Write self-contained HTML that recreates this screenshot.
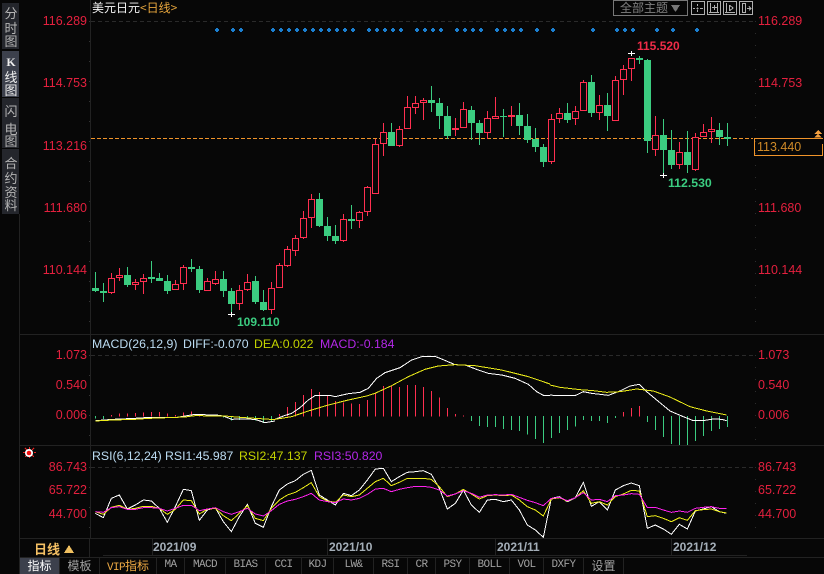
<!DOCTYPE html>
<html><head><meta charset="utf-8">
<style>
html,body{margin:0;padding:0;background:#070707;width:824px;height:574px;overflow:hidden}
body{position:relative;font-family:"Liberation Sans","WenQuanYi Zen Hei",sans-serif}
svg{position:absolute;left:0;top:0}
.t{position:absolute;white-space:nowrap;line-height:14px;font-size:12.5px}
.r{color:#e4203e}
.la{left:0;width:87px;text-align:right}
.ra{left:758px}
.h{font-size:12.3px;color:#bcdcf2}
.c{position:absolute;left:2px;width:18px;text-align:center;color:#b4b4b4;font:13px/14px "WenQuanYi Zen Hei","Noto Sans CJK SC",sans-serif}
.b{position:absolute;left:2px;width:17px;background:#24262c}
.d{position:absolute;font:bold 12px/14px "Liberation Sans",sans-serif;color:#a4aeb8}
.tab{position:absolute;top:558px;height:16px;line-height:15px;text-align:center;color:#a0a0a0;font:12px/15px "WenQuanYi Zen Hei","Noto Sans CJK SC",sans-serif}
.m{font:11px/15px "Liberation Mono",monospace;letter-spacing:-.6px}
</style></head><body>
<div class="b" style="top:3px;height:46px"></div>
<div class="b" style="top:51px;height:46px;background:#3c404c"></div>
<div class="b" style="top:98px;height:50px"></div>
<div class="b" style="top:149px;height:65px"></div>
<div class="c" style="top:6px">分</div><div class="c" style="top:21px">时</div><div class="c" style="top:34px">图</div>
<div class="c" style="top:55px;color:#eee;font:bold 12px/14px 'Liberation Serif',serif">K</div><div class="c" style="top:70px;color:#eee">线</div><div class="c" style="top:83px;color:#eee">图</div>
<div class="c" style="top:104px">闪</div><div class="c" style="top:122px">电</div><div class="c" style="top:134px">图</div>
<div class="c" style="top:156px">合</div><div class="c" style="top:171px">约</div><div class="c" style="top:185px">资</div><div class="c" style="top:198px">料</div>

<svg width="824" height="574" viewBox="0 0 824 574" shape-rendering="crispEdges" fill="none">
<!-- frame -->
<path stroke="#222" d="M90.5 0V538M19.5 214V574M20 334.500H824M20 445.500H824M20 538.500H824M20 557.500H824M89.500 538V557M103 555.500H747M152.500 538V555M327.500 538V555M495.500 538V555M671.500 538V555M59.500 558V574M99.500 558V574M156.500 558V574M184.500 558V574M225.500 558V574M265.500 558V574M301.500 558V574M333.500 558V574M373.500 558V574M407.500 558V574M435.500 558V574M469.500 558V574M509.500 558V574M543.500 558V574M583.500 558V574M623.500 558V574"/>
<path stroke="#333" stroke-dasharray="1 19" d="M89.500 21V330M89.500 355V440M89.500 467V535"/>
<path stroke="#2c2c2c" stroke-dasharray="1 11" d="M755.500 21V330M755.500 355V440M755.500 467V535"/>
<path stroke="#2a2a2a" stroke-dasharray="4 3" d="M91 21.500H753M91 355.500H753M91 467.500H753"/>
<path stroke="#f0942a" stroke-dasharray="4 2" d="M91 138.500H753"/>
<!-- blue dots -->
<g fill="#1b7fd0"><path d="M217 28h1v1h1v2h-1v1h-2v-1h-1v-2h1v-1z"/>
<path d="M233 28h1v1h1v2h-1v1h-2v-1h-1v-2h1v-1zM241 28h1v1h1v2h-1v1h-2v-1h-1v-2h1v-1zM273 28h1v1h1v2h-1v1h-2v-1h-1v-2h1v-1zM281 28h1v1h1v2h-1v1h-2v-1h-1v-2h1v-1zM289 28h1v1h1v2h-1v1h-2v-1h-1v-2h1v-1zM297 28h1v1h1v2h-1v1h-2v-1h-1v-2h1v-1zM305 28h1v1h1v2h-1v1h-2v-1h-1v-2h1v-1zM313 28h1v1h1v2h-1v1h-2v-1h-1v-2h1v-1zM321 28h1v1h1v2h-1v1h-2v-1h-1v-2h1v-1zM329 28h1v1h1v2h-1v1h-2v-1h-1v-2h1v-1zM337 28h1v1h1v2h-1v1h-2v-1h-1v-2h1v-1zM345 28h1v1h1v2h-1v1h-2v-1h-1v-2h1v-1zM353 28h1v1h1v2h-1v1h-2v-1h-1v-2h1v-1zM369 28h1v1h1v2h-1v1h-2v-1h-1v-2h1v-1zM377 28h1v1h1v2h-1v1h-2v-1h-1v-2h1v-1zM385 28h1v1h1v2h-1v1h-2v-1h-1v-2h1v-1zM393 28h1v1h1v2h-1v1h-2v-1h-1v-2h1v-1zM401 28h1v1h1v2h-1v1h-2v-1h-1v-2h1v-1zM417 28h1v1h1v2h-1v1h-2v-1h-1v-2h1v-1zM425 28h1v1h1v2h-1v1h-2v-1h-1v-2h1v-1zM433 28h1v1h1v2h-1v1h-2v-1h-1v-2h1v-1zM441 28h1v1h1v2h-1v1h-2v-1h-1v-2h1v-1zM457 28h1v1h1v2h-1v1h-2v-1h-1v-2h1v-1zM465 28h1v1h1v2h-1v1h-2v-1h-1v-2h1v-1zM473 28h1v1h1v2h-1v1h-2v-1h-1v-2h1v-1zM481 28h1v1h1v2h-1v1h-2v-1h-1v-2h1v-1zM497 28h1v1h1v2h-1v1h-2v-1h-1v-2h1v-1zM505 28h1v1h1v2h-1v1h-2v-1h-1v-2h1v-1zM513 28h1v1h1v2h-1v1h-2v-1h-1v-2h1v-1zM521 28h1v1h1v2h-1v1h-2v-1h-1v-2h1v-1zM537 28h1v1h1v2h-1v1h-2v-1h-1v-2h1v-1zM553 28h1v1h1v2h-1v1h-2v-1h-1v-2h1v-1zM593 28h1v1h1v2h-1v1h-2v-1h-1v-2h1v-1zM617 28h1v1h1v2h-1v1h-2v-1h-1v-2h1v-1zM625 28h1v1h1v2h-1v1h-2v-1h-1v-2h1v-1zM633 28h1v1h1v2h-1v1h-2v-1h-1v-2h1v-1zM657 28h1v1h1v2h-1v1h-2v-1h-1v-2h1v-1zM673 28h1v1h1v2h-1v1h-2v-1h-1v-2h1v-1zM697 28h1v1h1v2h-1v1h-2v-1h-1v-2h1v-1z"/></g>
<!-- red wicks -->
<path stroke="#ff2f50" d="M111.500 273V294M119.500 268V281M135.500 279V290M143.500 274V294M175.500 280V290M183.500 265V290M207.500 278V291M215.500 271V285M239.500 285V310M247.500 274V291M271.500 282V314M279.500 263V288M287.500 246V267M295.500 235V256M303.500 211V239M311.500 194V228M343.500 214V242M359.500 211V228M367.500 186V216M375.500 139V194M383.500 123V156M399.500 126V147M407.500 96V129M415.500 96V114M423.500 98V120M455.500 118V136M463.500 102V128M487.500 111V139M495.500 97V118M511.500 106V126M551.500 114V164M559.500 108V123M575.500 106V125M583.500 80V111M599.500 95V120M615.500 76V120M623.500 65V95M631.500 58V81M655.500 116V156M679.500 142V169M695.500 133V171M703.500 124V137M711.500 117V143"/>
<!-- red bodies -->
<path stroke="#ff2f50" fill="#070707" d="M108.500 278.500h6v14h-6zM116.500 275.500h6v2h-6zM132.500 282.500h6v2h-6zM140.500 278.500h6v3h-6zM172.500 284.500h6v5h-6zM180.500 267.500h6v16h-6zM204.500 281.500h6v9h-6zM212.500 279.500h6v4h-6zM236.500 290.500h6v13h-6zM244.500 282.500h6v7h-6zM268.500 288.500h6v21h-6zM276.500 265.500h6v22h-6zM284.500 249.500h6v16h-6zM292.500 238.500h6v12h-6zM300.500 218.500h6v19h-6zM308.500 199.500h6v18h-6zM340.500 219.500h6v21h-6zM356.500 212.500h6v8h-6zM364.500 187.500h6v24h-6zM372.500 144.500h6v49h-6zM380.500 132.500h6v11h-6zM396.500 129.500h6v16h-6zM404.500 107.500h6v21h-6zM412.500 103.500h6v4h-6zM420.500 100.500h6v2h-6zM460.500 109.500h6v18h-6zM484.500 118.500h6v14h-6zM492.500 116.500h6v2h-6zM548.500 119.500h6v42h-6zM556.500 113.500h6v5h-6zM572.500 111.500h6v7h-6zM580.500 82.500h6v28h-6zM596.500 105.500h6v7h-6zM612.500 80.500h6v40h-6zM620.500 69.500h6v10h-6zM628.500 58.500h6v10h-6zM652.500 135.500h6v14h-6zM676.500 152.500h6v12h-6zM692.500 137.500h6v32h-6zM700.500 132.500h6v4h-6zM708.500 129.500h6v2h-6z"/>
<path fill="#ff2f50" d="M452 128h7v2h-7zM508 115h7v2h-7z"/>
<!-- green wicks -->
<path stroke="#3bcc80" d="M95.500 272V292M103.500 283V302M127.500 267V287M151.500 261V283M159.500 273V281M167.500 275V294M191.500 259V272M199.500 266V293M223.500 271V297M231.500 288V314M255.500 276V304M263.500 290V311M319.500 193V227M327.500 217V241M335.500 225V244M351.500 205V229M391.500 123V146M431.500 86V112M439.500 98V129M447.500 106V139M471.500 106V140M479.500 120V145M503.500 109V137M519.500 103V135M527.500 114V143M535.500 128V152M543.500 144V167M567.500 103V123M591.500 75V117M607.500 93V131M639.500 56V64M647.500 59V153M663.500 119V175M671.500 130V169M687.500 131V173M719.500 123V145M727.500 123V146"/>
<path fill="#3bcc80" d="M92 288h7v3h-7zM100 291h7v2h-7zM124 275h7v10h-7zM148 277h7v2h-7zM156 278h7v3h-7zM164 281h7v10h-7zM188 267h7v2h-7zM196 269h7v21h-7zM220 279h7v12h-7zM228 291h7v13h-7zM252 281h7v21h-7zM260 302h7v8h-7zM316 199h7v27h-7zM324 226h7v10h-7zM332 236h7v5h-7zM348 219h7v2h-7zM388 132h7v14h-7zM428 100h7v3h-7zM436 103h7v13h-7zM444 116h7v20h-7zM468 110h7v13h-7zM476 123h7v10h-7zM500 116h7v1h-7zM516 115h7v11h-7zM524 126h7v14h-7zM532 139h7v8h-7zM540 147h7v15h-7zM564 113h7v7h-7zM588 82h7v31h-7zM604 105h7v11h-7zM636 58h7v2h-7zM644 60h7v81h-7zM660 135h7v15h-7zM668 150h7v15h-7zM684 152h7v13h-7zM716 130h7v7h-7zM724 137h7v2h-7z"/>
<!-- crosses -->
<path stroke="#fff" d="M628 53.500h7M631.500 51v5M660 175.500h7M663.500 173v5M228 314.500h7M231.500 312v5"/>

<!-- MACD -->
<g stroke-width="1">
<g transform="translate(0,335) scale(.33333)">
<path vector-effect="non-scaling-stroke" stroke="#ff2f50" d="M334.500 244V240M358.500 244V235M382.500 244V235M406.500 244V234M430.500 244V233M454.500 244V231M478.500 244V231M502.500 244V235M526.500 244V240M550.500 244V233M574.500 244V229M598.500 244V238M622.500 244V238M646.500 244V238"/>
<path vector-effect="non-scaling-stroke" stroke="#3bcc80" d="M286.500 243V250M310.500 243V252M670.500 243V247M694.500 243V256M718.500 243V255M742.500 243V250M766.500 243V256M790.500 243V264M814.500 243V258"/>
<polyline vector-effect="non-scaling-stroke" stroke="#fff" points="286,257 340,253 405,250 450,247 525,248 555,243 585,238 660,241 675,245 695,253 720,252 765,253 795,263 825,258"/>
<polyline vector-effect="non-scaling-stroke" stroke="#ecec1a" points="286,258 340,255 405,253 450,250 555,246 585,242 675,243 720,247 765,250 825,254"/>
</g>
<g transform="translate(275,335) scale(.33333)">
<path vector-effect="non-scaling-stroke" stroke="#ff2f50" d="M13.500 244V237M37.500 244V216M61.500 244V201M85.500 244V180M109.500 244V162M133.500 244V171M157.500 244V180M181.500 244V198M205.500 244V202M229.500 244V205M253.500 244V207M277.500 244V195M301.500 244V172M325.500 244V153M349.500 244V153M373.500 244V156M397.500 244V150M421.500 244V150M445.500 244V156M469.500 244V168M493.500 244V188M517.500 244V219M541.500 244V237M565.500 244V241"/>
<path vector-effect="non-scaling-stroke" stroke="#3bcc80" d="M589.500 243V258M613.500 243V273M637.500 243V276M661.500 243V276M685.500 243V282M709.500 243V285M733.500 243V288M757.500 243V298M781.500 243V312M805.500 243V324"/>
<polyline vector-effect="non-scaling-stroke" stroke="#fff" points="0,253 25,243 50,235 75,218 100,195 120,182 165,181 180,185 220,176 255,172 280,160 305,130 330,113 375,98 410,75 440,65 480,64 500,72 540,89 570,90 610,105 640,115 680,120 720,130 760,148 785,170 805,181 825,181"/>
<polyline vector-effect="non-scaling-stroke" stroke="#ecec1a" points="0,253 50,245 100,228 160,210 220,195 275,183 300,175 350,152 400,125 450,103 490,93 540,89 600,92 680,105 760,125 825,147"/>
</g>
<g transform="translate(550,335) scale(.33333)">
<path vector-effect="non-scaling-stroke" stroke="#3bcc80" d="M4.500 243V309M28.500 243V294M52.500 243V285M76.500 243V274M100.500 243V255M124.500 243V258M148.500 243V258M172.500 243V264M196.500 243V249M292.500 243V261M316.500 243V285M340.500 243V306M364.500 243V327M388.500 243V330M412.500 243V330M436.500 243V318M460.500 243V303M484.500 243V288M508.500 243V282M532.500 243V276"/>
<path vector-effect="non-scaling-stroke" stroke="#ff2f50" d="M220.500 244V231M244.500 244V219M268.500 244V213"/>
<polyline vector-effect="non-scaling-stroke" stroke="#fff" points="0,180 20,182 75,182 100,170 125,175 175,181 210,168 240,153 268,148 290,170 360,228 400,245 430,257 465,256 490,252 515,253 530,257"/>
<polyline vector-effect="non-scaling-stroke" stroke="#ecec1a" points="0,150 30,157 90,164 130,167 170,172 210,170 260,162 310,168 360,186 420,215 470,228 530,240"/>
</g>
<!-- RSI -->
<g transform="translate(0,445) scale(.33333)">
<polyline vector-effect="non-scaling-stroke" stroke="#fff" points="286,205 310,218 334,160 358,150 382,192 406,180 430,165 454,168 478,190 502,232 526,185 550,133 574,137 598,226 622,195 646,188 670,230 694,260 718,215 742,178 766,235 790,247 814,185 838,135"/>
<polyline vector-effect="non-scaling-stroke" stroke="#ecec1a" points="286,200 310,208 334,187 358,181 382,193 406,190 430,184 454,184 478,190 502,208 526,193 550,165 574,167 598,207 622,193 646,190 670,212 694,227 718,205 742,182 766,220 790,227 814,190 838,165"/>
<polyline vector-effect="non-scaling-stroke" stroke="#ff22ee" points="286,200 310,202 334,188 358,185 382,193 406,193 430,188 454,188 478,190 502,198 526,190 550,181 574,181 598,197 622,192 646,188 670,200 694,208 718,200 742,190 766,207 790,213 814,197 838,178"/>
</g>
<g transform="translate(275,445) scale(.33333)">
<polyline vector-effect="non-scaling-stroke" stroke="#fff" points="13,135 37,117 61,107 85,88 109,76 133,150 157,165 181,180 205,145 229,152 253,135 277,105 301,72 325,70 349,110 373,95 397,82 421,80 445,77 469,88 493,130 517,192 541,175 565,135 589,180 613,202 637,165 661,163 685,170 709,165 733,195 757,240 781,255 805,277 829,160"/>
<polyline vector-effect="non-scaling-stroke" stroke="#ecec1a" points="13,165 37,150 61,142 85,128 109,113 133,155 157,168 181,172 205,150 229,155 253,150 277,130 301,110 325,100 349,122 373,112 397,100 421,100 445,100 469,103 493,125 517,155 541,147 565,133 589,147 613,162 637,152 661,150 685,152 709,150 733,165 757,185 781,195 805,213 829,162"/>
<polyline vector-effect="non-scaling-stroke" stroke="#ff22ee" points="13,178 37,168 61,163 85,155 109,145 133,165 157,170 181,173 205,162 229,165 253,160 277,148 301,132 325,130 349,140 373,133 397,128 421,124 445,124 469,127 493,135 517,153 541,147 565,137 589,145 613,157 637,150 661,149 685,150 709,148 733,157 757,166 781,173 805,182 829,160"/>
</g>
<g transform="translate(550,445) scale(.33333)">
<polyline vector-effect="non-scaling-stroke" stroke="#fff" points="4.500,160 28,155 52,170 76,158 100,112 124,184 148,170 172,195 196,135 220,122 244,114 268,122 292,250 316,240 340,252 364,268 388,238 412,252 436,198 460,192 484,185 508,200 530,205"/>
<polyline vector-effect="non-scaling-stroke" stroke="#ecec1a" points="4.500,162 28,158 52,168 76,158 100,137 124,175 148,170 172,180 196,155 220,147 244,136 268,138 292,215 316,212 340,220 364,230 388,218 412,226 436,197 460,194 484,192 508,200 530,204"/>
<polyline vector-effect="non-scaling-stroke" stroke="#ff22ee" points="4.500,160 28,157 52,167 76,158 100,143 124,165 148,163 172,170 196,152 220,150 244,146 268,148 292,188 316,187 340,195 364,202 388,198 412,202 436,190 460,187 484,185 508,190 530,190"/>
</g>
</g>

<!-- price tag -->
<path stroke="#f0942a" d="M754.500 138.500H822.500V155.500H754.500ZM754.500 138.500"/>
<path fill="#070707" d="M822 139h2v5h-2z"/>
<path fill="#f4a040" d="M818 130l4 4h-8zM818 134l4 3.500h-8z"/>
<!-- toolbar -->
<path stroke="#777" d="M613.500 0.500H687.500V15.500H613.500Z"/>
<path fill="#777" d="M671 5h9l-4.500 7z"/>
<g stroke="#b0b0b0"><path d="M691.500 1.500h13v13h-13zM707.500 1.500h13v13h-13zM723.500 1.500h13v13h-13zM739.500 1.500h13v13h-13z"/>
<path d="M697.500 4v2M697.500 10v2M693 8.500h2M700 8.500h3M697.500 7.500v2M696.500 8.500h2"/>
<path d="M710.500 3v9M709 12.500h10M717.500 3v9M714.500 5v5M712 7.500h5"/>
<path d="M726.500 3v9M725 12.500h10M729.500 5v6M730 5.500l3 2.500-3 2.500"/>
<path d="M742.500 3v10M742 3.500h3M742 12.500h3M745.500 3v10M747 8.500h4M749 6.500l2 2-2 2"/></g>
<!-- sun -->
<path stroke="#e82020" d="M29.500 447v2M29.500 456v2M23 452.500h2M34 452.500h2M25 448l2 2M34 448l-2 2M25 457l2-2M34 457l-2-2"/>
<circle cx="29" cy="453" r="4" fill="#fff" shape-rendering="auto"/>
<circle cx="29" cy="453" r="2.300" fill="#f01010" shape-rendering="auto"/>
<!-- triangle -->
<path fill="#f0c060" d="M69 545l5 8h-10z"/>
</svg>

<div class="t" style="left:92px;top:1px;color:#f4f4f4;font:12px/14px 'WenQuanYi Zen Hei','Noto Sans CJK SC',sans-serif">美元日元<span style="color:#e6a53c">&lt;日线&gt;</span></div>
<div class="t" style="left:620px;top:1px;color:#808080;font:12px/14px 'WenQuanYi Zen Hei','Noto Sans CJK SC',sans-serif">全部主题</div>

<div class="t r la" style="top:14px">116.289</div>
<div class="t r la" style="top:76px">114.753</div>
<div class="t r la" style="top:139px">113.216</div>
<div class="t r la" style="top:201px">111.680</div>
<div class="t r la" style="top:263px">110.144</div>
<div class="t r ra" style="top:14px">116.289</div>
<div class="t r ra" style="top:76px">114.753</div>
<div class="t r ra" style="top:201px">111.680</div>
<div class="t r ra" style="top:263px">110.144</div>
<div class="t" style="left:757px;top:140px;color:#cf8a28">113.440</div>

<div class="t" style="left:637px;top:39px;font-weight:bold;font-size:12px;color:#f02c48">115.520</div>
<div class="t" style="left:668px;top:176px;font-weight:bold;font-size:12.3px;color:#3bcc80">112.530</div>
<div class="t" style="left:237px;top:315px;font-weight:bold;font-size:12px;color:#3bcc80">109.110</div>

<div class="t h" style="left:92px;top:337px">MACD(26,12,9)</div>
<div class="t h" style="left:183px;top:337px">DIFF:-0.070</div>
<div class="t h" style="left:254px;top:337px;color:#c4d400">DEA:0.022</div>
<div class="t h" style="left:320px;top:337px;color:#b428e8">MACD:-0.184</div>
<div class="t r la" style="top:348px">1.073</div>
<div class="t r la" style="top:378px">0.540</div>
<div class="t r la" style="top:408px">0.006</div>
<div class="t r ra" style="top:348px">1.073</div>
<div class="t r ra" style="top:378px">0.540</div>
<div class="t r ra" style="top:408px">0.006</div>

<div class="t h" style="left:92px;top:449px">RSI(6,12,24)</div>
<div class="t h" style="left:165px;top:449px">RSI1:45.987</div>
<div class="t h" style="left:239px;top:449px;color:#c4d400">RSI2:47.137</div>
<div class="t h" style="left:314px;top:449px;color:#b428e8">RSI3:50.820</div>
<div class="t r la" style="top:460px">86.743</div>
<div class="t r la" style="top:483px">65.722</div>
<div class="t r la" style="top:507px">44.700</div>
<div class="t r ra" style="top:460px">86.743</div>
<div class="t r ra" style="top:483px">65.722</div>
<div class="t r ra" style="top:507px">44.700</div>

<div class="t" style="left:34px;top:542px;color:#f4c064;font:bold 13px/14px 'WenQuanYi Zen Hei','Noto Sans CJK SC',sans-serif">日线</div>
<div class="d" style="left:153px;top:540px">2021/09</div>
<div class="d" style="left:329px;top:540px">2021/10</div>
<div class="d" style="left:497px;top:540px">2021/11</div>
<div class="d" style="left:673px;top:540px">2021/12</div>

<div class="tab" style="left:20px;width:39px;background:#3c404c;color:#fff">指标</div>
<div class="tab" style="left:60px;width:39px">模板</div>
<div class="tab" style="left:100px;width:56px;color:#eeaa44"><span class="m">VIP</span>指标</div>
<div class="tab m" style="left:157px;width:27px">MA</div>
<div class="tab m" style="left:185px;width:40px">MACD</div>
<div class="tab m" style="left:226px;width:39px">BIAS</div>
<div class="tab m" style="left:266px;width:35px">CCI</div>
<div class="tab m" style="left:302px;width:31px">KDJ</div>
<div class="tab m" style="left:334px;width:39px">LW&amp;</div>
<div class="tab m" style="left:374px;width:33px">RSI</div>
<div class="tab m" style="left:408px;width:27px">CR</div>
<div class="tab m" style="left:436px;width:33px">PSY</div>
<div class="tab m" style="left:470px;width:39px">BOLL</div>
<div class="tab m" style="left:510px;width:33px">VOL</div>
<div class="tab m" style="left:544px;width:39px">DXFY</div>
<div class="tab" style="left:584px;width:39px">设置</div>
</body></html>
